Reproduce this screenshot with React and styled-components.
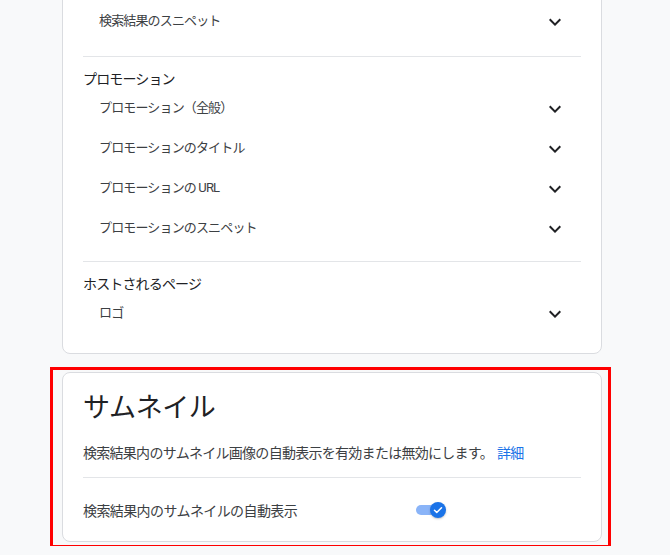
import styled, { createGlobalStyle } from "styled-components";

const GlobalStyle = createGlobalStyle`
  *, *::before, *::after {
    box-sizing: border-box;
  }
  html, body {
    margin: 0;
    padding: 0;
    background: #f8f9fa;
    font-family: Roboto, "Noto Sans CJK JP", sans-serif;
    color: #202124;
    overflow: hidden;
  }
`;

const Page = styled.div`
  width: 602px;
  padding-left: 62px;
  height: 555px;
`;

const Card = styled.div`
  background: #fff;
  border: 1px solid #dadce0;
  border-radius: 8px;
  padding: ${({ $top }) => $top || "17px"} 20px ${({ $bottom }) => $bottom || "0"};
  margin-top: ${({ $shift }) => $shift || "0"};
`;

const Section = styled.div`
  padding: ${({ $first }) => ($first ? "0 0 14px" : "12px 0")};
  border-top: ${({ $first }) => ($first ? "none" : "1px solid #e3e5e8")};
  &:last-child {
    padding-bottom: 0;
  }
`;

const GroupTitle = styled.div`
  font-size: 14px;
  letter-spacing: -0.85px;
  line-height: 20px;
  color: #202124;
`;

const Row = styled.div`
  height: 40px;
  display: flex;
  align-items: center;
  justify-content: space-between;
  padding: 0 14px 0 16px;
`;

const RowLabel = styled.span`
  font-size: 13px;
  line-height: 20px;
  letter-spacing: -0.85px;
  color: #3c4043;
  margin-bottom: 3px;
`;

const Chevron = styled.svg`
  width: 24px;
  height: 24px;
  fill: #202124;
`;

const Highlight = styled.div`
  margin: 13px 0 0 -12px;
  width: 561px;
  border: 3px solid #ff0000;
  padding: 2px 6px 3px 9px;
`;

const Title = styled.h2`
  margin: 0;
  font-size: 27px;
  font-weight: 400;
  line-height: 36px;
  letter-spacing: -0.4px;
  color: #202124;
`;

const Description = styled.p`
  margin: 17px 0 14px;
  font-size: 14px;
  line-height: 20px;
  letter-spacing: -0.72px;
  color: #3c4043;
`;

const Link = styled.a`
  color: #1a73e8;
  text-decoration: none;
  margin-left: 4px;
`;

const SettingRow = styled.div`
  border-top: 1px solid #e3e5e8;
  height: 64px;
  display: grid;
  grid-template-columns: 2fr 1fr;
  align-items: center;
`;

const SettingLabel = styled.span`
  font-size: 14px;
  letter-spacing: -0.6px;
  color: #3c4043;
`;

const Switch = styled.div`
  position: relative;
  width: 30px;
  height: 16px;
  display: flex;
  align-items: center;
  margin-left: 1px;
`;

const Track = styled.div`
  width: 26px;
  height: 10px;
  border-radius: 5px;
  background: #8ab4f8;
`;

const Thumb = styled.div`
  position: absolute;
  right: 0;
  top: 0;
  width: 16px;
  height: 16px;
  border-radius: 50%;
  background: #1a73e8;
  box-shadow: 0 1px 2px rgba(60, 64, 67, 0.3);
  display: flex;
  align-items: center;
  justify-content: center;
`;

function ExpandMore() {
  return (
    <Chevron viewBox="0 0 24 24">
      <path d="M16.59 8.59L12 13.17 7.41 8.59 6 10l6 6 6-6z" />
    </Chevron>
  );
}

function Item({ children }) {
  return (
    <Row>
      <RowLabel>{children}</RowLabel>
      <ExpandMore />
    </Row>
  );
}

const groups = [
  {
    title: "プロモーション",
    items: [
      "プロモーション（全般）",
      "プロモーションのタイトル",
      "プロモーションの URL",
      "プロモーションのスニペット",
    ],
  },
  { title: "ホストされるページ", items: ["ロゴ"] },
];

export default function App() {
  return (
    <Page>
      <GlobalStyle />
      <Card $shift="-9px" $top="10px" $bottom="19px">
        <Section $first>
          <Item>検索結果のスニペット</Item>
        </Section>
        {groups.map((g) => (
          <Section key={g.title}>
            <GroupTitle>{g.title}</GroupTitle>
            {g.items.map((it) => (
              <Item key={it}>{it}</Item>
            ))}
          </Section>
        ))}
      </Card>

      <Highlight>
        <Card>
          <Title>サムネイル</Title>
          <Description>
            検索結果内のサムネイル画像の自動表示を有効または無効にします。
            <Link href="#">詳細</Link>
          </Description>
          <SettingRow>
            <SettingLabel>検索結果内のサムネイルの自動表示</SettingLabel>
            <Switch>
              <Track />
              <Thumb>
                <svg width="12" height="12" viewBox="0 0 24 24">
                  <path
                    d="M5 12.5l4.5 4.5L19 7.5"
                    fill="none"
                    stroke="#fff"
                    strokeWidth="3"
                    strokeLinecap="round"
                    strokeLinejoin="round"
                  />
                </svg>
              </Thumb>
            </Switch>
          </SettingRow>
        </Card>
      </Highlight>
    </Page>
  );
}
